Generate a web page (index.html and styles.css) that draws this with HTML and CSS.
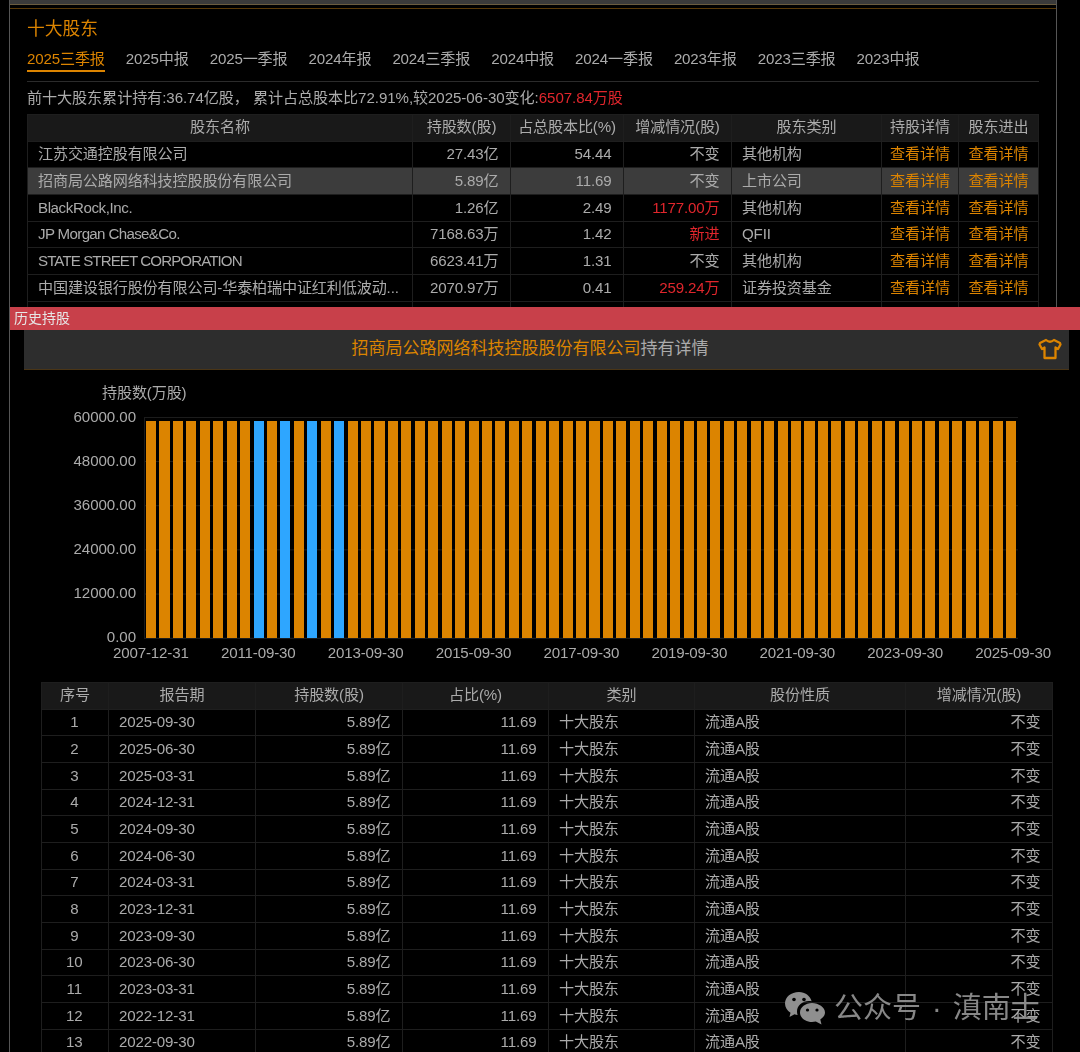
FILE: index.html
```html
<!DOCTYPE html>
<html lang="zh">
<head>
<meta charset="utf-8">
<title>十大股东</title>
<link rel="stylesheet" href="styles.css">
</head>
<body>
<section class="frame">
  <div class="topbar"></div>
  <h1 class="title">十大股东</h1>
  <nav class="tabs">
    <a class="tab active">2025三季报</a><a class="tab">2025中报</a><a class="tab">2025一季报</a><a class="tab">2024年报</a><a class="tab">2024三季报</a><a class="tab">2024中报</a><a class="tab">2024一季报</a><a class="tab">2023年报</a><a class="tab">2023三季报</a><a class="tab">2023中报</a>
  </nav>
  <p class="summary">前十大股东累计持有:36.74亿股， 累计占总股本比72.91%,较2025-06-30变化:<span class="red">6507.84万股</span></p>
  <table class="grid holders">
    <colgroup><col class="h1"><col class="h2"><col class="h3"><col class="h4"><col class="h5"><col class="h6"><col class="h7"></colgroup>
    <thead><tr><th>股东名称</th><th>持股数(股)</th><th>占总股本比(%)</th><th>增减情况(股)</th><th>股东类别</th><th>持股详情</th><th>股东进出</th></tr></thead>
    <tbody>
      <tr><td class="l">江苏交通控股有限公司</td><td class="r">27.43亿</td><td class="r">54.44</td><td class="r">不变</td><td class="l">其他机构</td><td class="c o">查看详情</td><td class="c o">查看详情</td></tr>
      <tr class="hl"><td class="l">招商局公路网络科技控股股份有限公司</td><td class="r">5.89亿</td><td class="r">11.69</td><td class="r">不变</td><td class="l">上市公司</td><td class="c o">查看详情</td><td class="c o">查看详情</td></tr>
      <tr><td class="l latin">BlackRock,Inc.</td><td class="r">1.26亿</td><td class="r">2.49</td><td class="r red">1177.00万</td><td class="l">其他机构</td><td class="c o">查看详情</td><td class="c o">查看详情</td></tr>
      <tr><td class="l jp">JP Morgan Chase&amp;Co.</td><td class="r">7168.63万</td><td class="r">1.42</td><td class="r red">新进</td><td class="l">QFII</td><td class="c o">查看详情</td><td class="c o">查看详情</td></tr>
      <tr><td class="l caps">STATE STREET CORPORATION</td><td class="r">6623.41万</td><td class="r">1.31</td><td class="r">不变</td><td class="l">其他机构</td><td class="c o">查看详情</td><td class="c o">查看详情</td></tr>
      <tr><td class="l">中国建设银行股份有限公司-华泰柏瑞中证红利低波动...</td><td class="r">2070.97万</td><td class="r">0.41</td><td class="r red">259.24万</td><td class="l">证券投资基金</td><td class="c o">查看详情</td><td class="c o">查看详情</td></tr>
      <tr><td class="l"></td><td></td><td></td><td></td><td></td><td></td><td></td></tr>
    </tbody>
  </table>
</section>

<section class="modal">
  <header class="modal-head">历史持股</header>
  <div class="detail-bar">
    <span class="detail-title"><span class="o">招商局公路网络科技控股股份有限公司</span>持有详情</span>
    <svg class="shirt" viewBox="0 0 24 22" width="24" height="22" aria-hidden="true"><path d="M8 2 L2 5 L1.5 6.5 L4 11 L6.5 9.5 L6.5 20 L17.5 20 L17.5 9.5 L20 11 L22.5 6.5 L22 5 L16 2 Q12 5.5 8 2 Z" fill="none" stroke="#dc8400" stroke-width="2.3" stroke-linejoin="round"/></svg>
  </div>

  <div class="chart">
    <div class="chart-unit">持股数(万股)</div>
    <div class="plot-row">
      <div class="y-axis"><span>60000.00</span><span>48000.00</span><span>36000.00</span><span>24000.00</span><span>12000.00</span><span>0.00</span></div>
      <div class="plot">
        <i></i><i></i><i></i><i></i><i></i><i></i><i></i><i></i><i class="b"></i><i></i><i class="b"></i><i></i><i class="b"></i><i></i><i class="b"></i><i></i><i></i><i></i><i></i><i></i><i></i><i></i><i></i><i></i><i></i><i></i><i></i><i></i><i></i><i></i><i></i><i></i><i></i><i></i><i></i><i></i><i></i><i></i><i></i><i></i><i></i><i></i><i></i><i></i><i></i><i></i><i></i><i></i><i></i><i></i><i></i><i></i><i></i><i></i><i></i><i></i><i></i><i></i><i></i><i></i><i></i><i></i><i></i><i></i><i></i>
      </div>
    </div>
    <div class="x-axis"><span>2007-12-31</span><span>2011-09-30</span><span>2013-09-30</span><span>2015-09-30</span><span>2017-09-30</span><span>2019-09-30</span><span>2021-09-30</span><span>2023-09-30</span><span>2025-09-30</span></div>
  </div>

  <table class="grid history">
    <colgroup><col class="c1"><col class="c2"><col class="c3"><col class="c4"><col class="c5"><col class="c6"><col class="c7"></colgroup>
    <thead><tr><th>序号</th><th>报告期</th><th>持股数(股)</th><th>占比(%)</th><th>类别</th><th>股份性质</th><th>增减情况(股)</th></tr></thead>
    <tbody>
      <tr><td class="c">1</td><td class="l">2025-09-30</td><td class="r">5.89亿</td><td class="r">11.69</td><td class="l">十大股东</td><td class="l">流通A股</td><td class="r">不变</td></tr>
      <tr><td class="c">2</td><td class="l">2025-06-30</td><td class="r">5.89亿</td><td class="r">11.69</td><td class="l">十大股东</td><td class="l">流通A股</td><td class="r">不变</td></tr>
      <tr><td class="c">3</td><td class="l">2025-03-31</td><td class="r">5.89亿</td><td class="r">11.69</td><td class="l">十大股东</td><td class="l">流通A股</td><td class="r">不变</td></tr>
      <tr><td class="c">4</td><td class="l">2024-12-31</td><td class="r">5.89亿</td><td class="r">11.69</td><td class="l">十大股东</td><td class="l">流通A股</td><td class="r">不变</td></tr>
      <tr><td class="c">5</td><td class="l">2024-09-30</td><td class="r">5.89亿</td><td class="r">11.69</td><td class="l">十大股东</td><td class="l">流通A股</td><td class="r">不变</td></tr>
      <tr><td class="c">6</td><td class="l">2024-06-30</td><td class="r">5.89亿</td><td class="r">11.69</td><td class="l">十大股东</td><td class="l">流通A股</td><td class="r">不变</td></tr>
      <tr><td class="c">7</td><td class="l">2024-03-31</td><td class="r">5.89亿</td><td class="r">11.69</td><td class="l">十大股东</td><td class="l">流通A股</td><td class="r">不变</td></tr>
      <tr><td class="c">8</td><td class="l">2023-12-31</td><td class="r">5.89亿</td><td class="r">11.69</td><td class="l">十大股东</td><td class="l">流通A股</td><td class="r">不变</td></tr>
      <tr><td class="c">9</td><td class="l">2023-09-30</td><td class="r">5.89亿</td><td class="r">11.69</td><td class="l">十大股东</td><td class="l">流通A股</td><td class="r">不变</td></tr>
      <tr><td class="c">10</td><td class="l">2023-06-30</td><td class="r">5.89亿</td><td class="r">11.69</td><td class="l">十大股东</td><td class="l">流通A股</td><td class="r">不变</td></tr>
      <tr><td class="c">11</td><td class="l">2023-03-31</td><td class="r">5.89亿</td><td class="r">11.69</td><td class="l">十大股东</td><td class="l">流通A股</td><td class="r">不变</td></tr>
      <tr><td class="c">12</td><td class="l">2022-12-31</td><td class="r">5.89亿</td><td class="r">11.69</td><td class="l">十大股东</td><td class="l">流通A股</td><td class="r">不变</td></tr>
      <tr><td class="c">13</td><td class="l">2022-09-30</td><td class="r">5.89亿</td><td class="r">11.69</td><td class="l">十大股东</td><td class="l">流通A股</td><td class="r">不变</td></tr>
    </tbody>
  </table>
</section>

<div class="watermark">
  <svg viewBox="0 0 42 34" width="42" height="34" aria-hidden="true">
    <path d="M15 1 C7 1 1 6 1 12.5 C1 16.5 3.2 19.6 6.5 21.7 L5.5 26 L10.5 23.3 C11.5 23.6 12.6 23.8 13.6 23.9 C13.2 22.8 13 21.7 13 20.5 C13 14.6 18.4 10 25 10 C25.9 10 26.8 10.1 27.6 10.2 C26.2 4.9 21 1 15 1 Z" fill="#8f8f8f"/>
    <path d="M28 12 C21.4 12 16 16.3 16 21.5 C16 26.7 21.4 31 28 31 C29.3 31 30.6 30.8 31.8 30.5 L37.5 33.5 L36.3 28.4 C39.2 26.6 41 24.2 41 21.5 C41 16.3 34.6 12 28 12 Z" fill="#8f8f8f"/>
    <circle cx="10" cy="8.5" r="1.8" fill="#000"/><circle cx="20" cy="8.5" r="1.8" fill="#000"/>
    <circle cx="23.5" cy="19" r="1.6" fill="#000"/><circle cx="33" cy="19" r="1.6" fill="#000"/>
  </svg>
  <span>公众号 · 滇南士</span>
</div>
</body>
</html>
```
FILE: styles.css
```css
* { box-sizing: border-box; }
html, body { margin: 0; padding: 0; }
body {
  width: 1080px;
  height: 1052px;
  overflow: hidden;
  position: relative;
  background: #000;
  color: #ababab;
  font: 15.1px/1.2 "Liberation Sans", "Noto Sans CJK SC", sans-serif;
  letter-spacing: -0.15px;
  filter: blur(0.4px);
}
.red { color: #e0262c; }
.o { color: #dc8400; }

.frame {
  margin-left: 9px;
  width: 1048px;
  height: 307px;
  overflow: hidden;
  border-left: 1px solid #555;
  border-right: 1px solid #555;
  padding: 0 17px;
}
.topbar {
  height: 9px;
  margin: 0 -17px;
  background: #000;
  border-top: 4px solid #3a3a3a;
  border-bottom: 1px solid #5a3a08;
  box-shadow: inset 0 1px 0 #6a5c40;
}
.title {
  margin: 0;
  padding-top: 9px;
  height: 37px;
  font-size: 17.8px;
  line-height: 22px;
  font-weight: 400;
  letter-spacing: 0;
  color: #dc8400;
}
.tabs {
  display: flex;
  gap: 21px;
  height: 36px;
  padding-top: 3px;
  border-bottom: 1px solid #2b2b2b;
}
.tab { height: 23px; line-height: 20px; white-space: nowrap; }
.tab.active {
  color: #dc8400;
  border-bottom: 2px solid #dc8400;
}
.summary {
  margin: 0;
  height: 32px;
  padding-top: 7px;
  line-height: 18px;
  white-space: nowrap;
  letter-spacing: -0.07px;
}

.grid {
  border-collapse: collapse;
  table-layout: fixed;
}
.grid th, .grid td {
  height: 26.67px;
  padding: 0 11.5px 0 10px;
  border: 1px solid #1e1e1e;
  white-space: nowrap;
  overflow: hidden;
  font-weight: 400;
}
.grid th { background: #191919; text-align: center; padding: 0 2px 2px; }
.grid .l { text-align: left; }
.grid .r { text-align: right; }
.grid .c { text-align: center; }
.grid tr.hl td { background: #3c3c3c; }
.grid td.o { padding: 0 2px; }
.grid td.latin { letter-spacing: -0.4px; }
.grid td.jp { letter-spacing: -0.65px; }
.grid td.caps { letter-spacing: -0.9px; }
.holders { width: 1011px; }
.h1 { width: 385px; }
.h2 { width: 98px; }
.h3 { width: 113px; }
.h4 { width: 108px; }
.h5 { width: 150px; }
.h6 { width: 77px; }
.h7 { width: 80px; }

.modal {
  margin-left: 9px;
  height: 745px;
  overflow: hidden;
  border-left: 1px solid #555;
  background: #000;
}
.modal-head {
  height: 23px;
  padding-left: 4px;
  line-height: 23px;
  font-size: 14px;
  letter-spacing: 0;
  color: #e6e6e6;
  background: #c8404a;
}
.detail-bar {
  display: flex;
  align-items: center;
  justify-content: center;
  position: relative;
  width: 1045px;
  height: 40px;
  margin-left: 14px;
  padding-right: 33px;
  background: #2d2d2d;
  border-bottom: 1px solid #4a3516;
  font-size: 17px;
  letter-spacing: 0;
}
.shirt { position: absolute; right: 7px; top: 8px; }

.chart { width: 1060px; padding-top: 13px; }
.chart-unit { padding-left: 92px; height: 19px; line-height: 19px; }
.plot-row { display: flex; height: 229px; margin-top: 15px; padding-left: 13px; }
.y-axis {
  width: 113px;
  height: 237px;
  margin-top: -9px;
  display: flex;
  flex-direction: column;
  justify-content: space-between;
  text-align: right;
  line-height: 17px;
  letter-spacing: -0.05px;
}
.plot {
  margin-left: 8px;
  width: 874px;
  height: 222px;
  display: flex;
  gap: 3.35px;
  align-items: flex-end;
  padding: 3px 2px 0 1px;
  border-top: 1px solid #1c1c1c;
  border-left: 1px solid #1c1c1c;
  border-bottom: 1px solid #1c1c1c;
  background: linear-gradient(#1c1c1c 1px, transparent 1px) 0 43px / 100% 44.2px;
}
.plot i { flex: 1 1 0; height: 100%; background: #dc8400; }
.plot i.b { background: #2ea6ff; }
.x-axis {
  display: flex;
  justify-content: space-between;
  width: 938px;
  margin-left: 103px;
  margin-top: -2px;
  line-height: 18px;
}

.history { width: 1011px; margin: 20px 0 0 31px; }
.c1 { width: 67px; }
.c2 { width: 147px; }
.c3 { width: 147px; }
.c4 { width: 146px; }
.c5 { width: 146px; }
.c6 { width: 211px; }
.c7 { width: 147px; }

.watermark {
  position: absolute;
  left: 784px;
  top: 990px;
  display: flex;
  align-items: center;
  gap: 8px;
  font-size: 29px;
  line-height: 36px;
  letter-spacing: 0;
  word-spacing: 3px;
  color: rgba(150,150,150,.9);
  white-space: nowrap;
}
```
